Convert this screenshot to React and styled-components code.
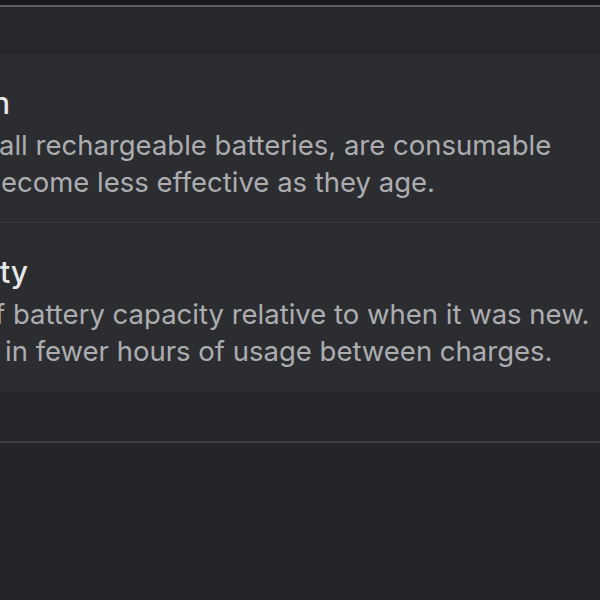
import React from 'react';
import styled, { createGlobalStyle } from 'styled-components';

const GlobalStyle = createGlobalStyle`
  html, body {
    margin: 0;
    padding: 0;
    background: #232528;
    overflow: hidden;
  }
  body {
    font-family: "Inter", "Noto Sans", "Liberation Sans", sans-serif;
    -webkit-font-smoothing: antialiased;
  }
`;

const sections = [
  {
    title: ['Battery Conditio', 'n'],
    titleShift: -8,
    lines: [
      { hidden: 'Lithium-ion batteries, like ', text: 'all rechargeable batteries, are consumable', shift: -1 },
      { hidden: 'components that b', text: 'ecome less effective as they age.', shift: 1 },
    ],
  },
  {
    title: ['Maximum Capaci', 'ty'],
    titleShift: 0,
    lines: [
      { hidden: 'This is a measure of ', text: 'battery capacity relative to when it was new.', shift: 13 },
      { hidden: 'Lower capacity may result ', text: 'in fewer hours of usage between charges.', shift: 5 },
    ],
  },
];

const App = () => {
  return (
    <>
      <GlobalStyle />
      <Window>
        <TitleStrip />
        <Sheet>
          <SheetHeader />
          <Card>
            {sections.map((s, i) => (
              <Row key={i} last={i === sections.length - 1}>
                <Heading shift={s.titleShift}>
                  <Overhang>{s.title[0]}</Overhang>
                  {s.title[1]}
                </Heading>
                <Body>
                  {s.lines.map((l, j) => (
                    <Line key={j} shift={l.shift}>
                      <Overhang>{l.hidden}</Overhang>
                      {l.text}
                    </Line>
                  ))}
                </Body>
              </Row>
            ))}
          </Card>
          <SheetFooter />
        </Sheet>
        <Below />
      </Window>
    </>
  );
};

const Window = styled.div`
  display: flex;
  flex-direction: column;
  height: 600px;
  background: #232528;
`;

const TitleStrip = styled.div`
  height: 5px;
  background: #18191c;
`;

const Sheet = styled.div`
  display: flex;
  flex-direction: column;
  border-top: 2px solid #5f6064;
  border-bottom: 2px solid #3c3e41;
  background: #27282c;
`;

const SheetHeader = styled.div`
  height: 47px;
  background: #27282c;
`;

const Card = styled.div`
  display: flex;
  flex-direction: column;
  background: #2c2d31;
`;

const Row = styled.div`
  display: flex;
  flex-direction: column;
  gap: 6px;
  padding: 31px 0 ${(p) => (p.last ? 22 : 21)}px;
  border-bottom: ${(p) => (p.last ? 'none' : '1px solid #3a3b3f')};
`;

const Overhang = styled.span`
  display: flex;
  justify-content: flex-end;
  width: 0;
  white-space: pre;
`;

const Heading = styled.div`
  display: flex;
  margin-left: ${(p) => p.shift}px;
  font-size: 30px;
  line-height: 36px;
  font-weight: 500;
  color: #e8e8ea;
  white-space: pre;
`;

const Body = styled.div`
  display: flex;
  flex-direction: column;
`;

const Line = styled.div`
  display: flex;
  margin-left: ${(p) => p.shift}px;
  font-size: 27.5px;
  line-height: 37px;
  color: #adadb1;
  white-space: pre;
`;

const SheetFooter = styled.div`
  height: 49px;
  background: #26272b;
`;

const Below = styled.div`
  flex: 1;
  background: #232528;
`;

export default App;
